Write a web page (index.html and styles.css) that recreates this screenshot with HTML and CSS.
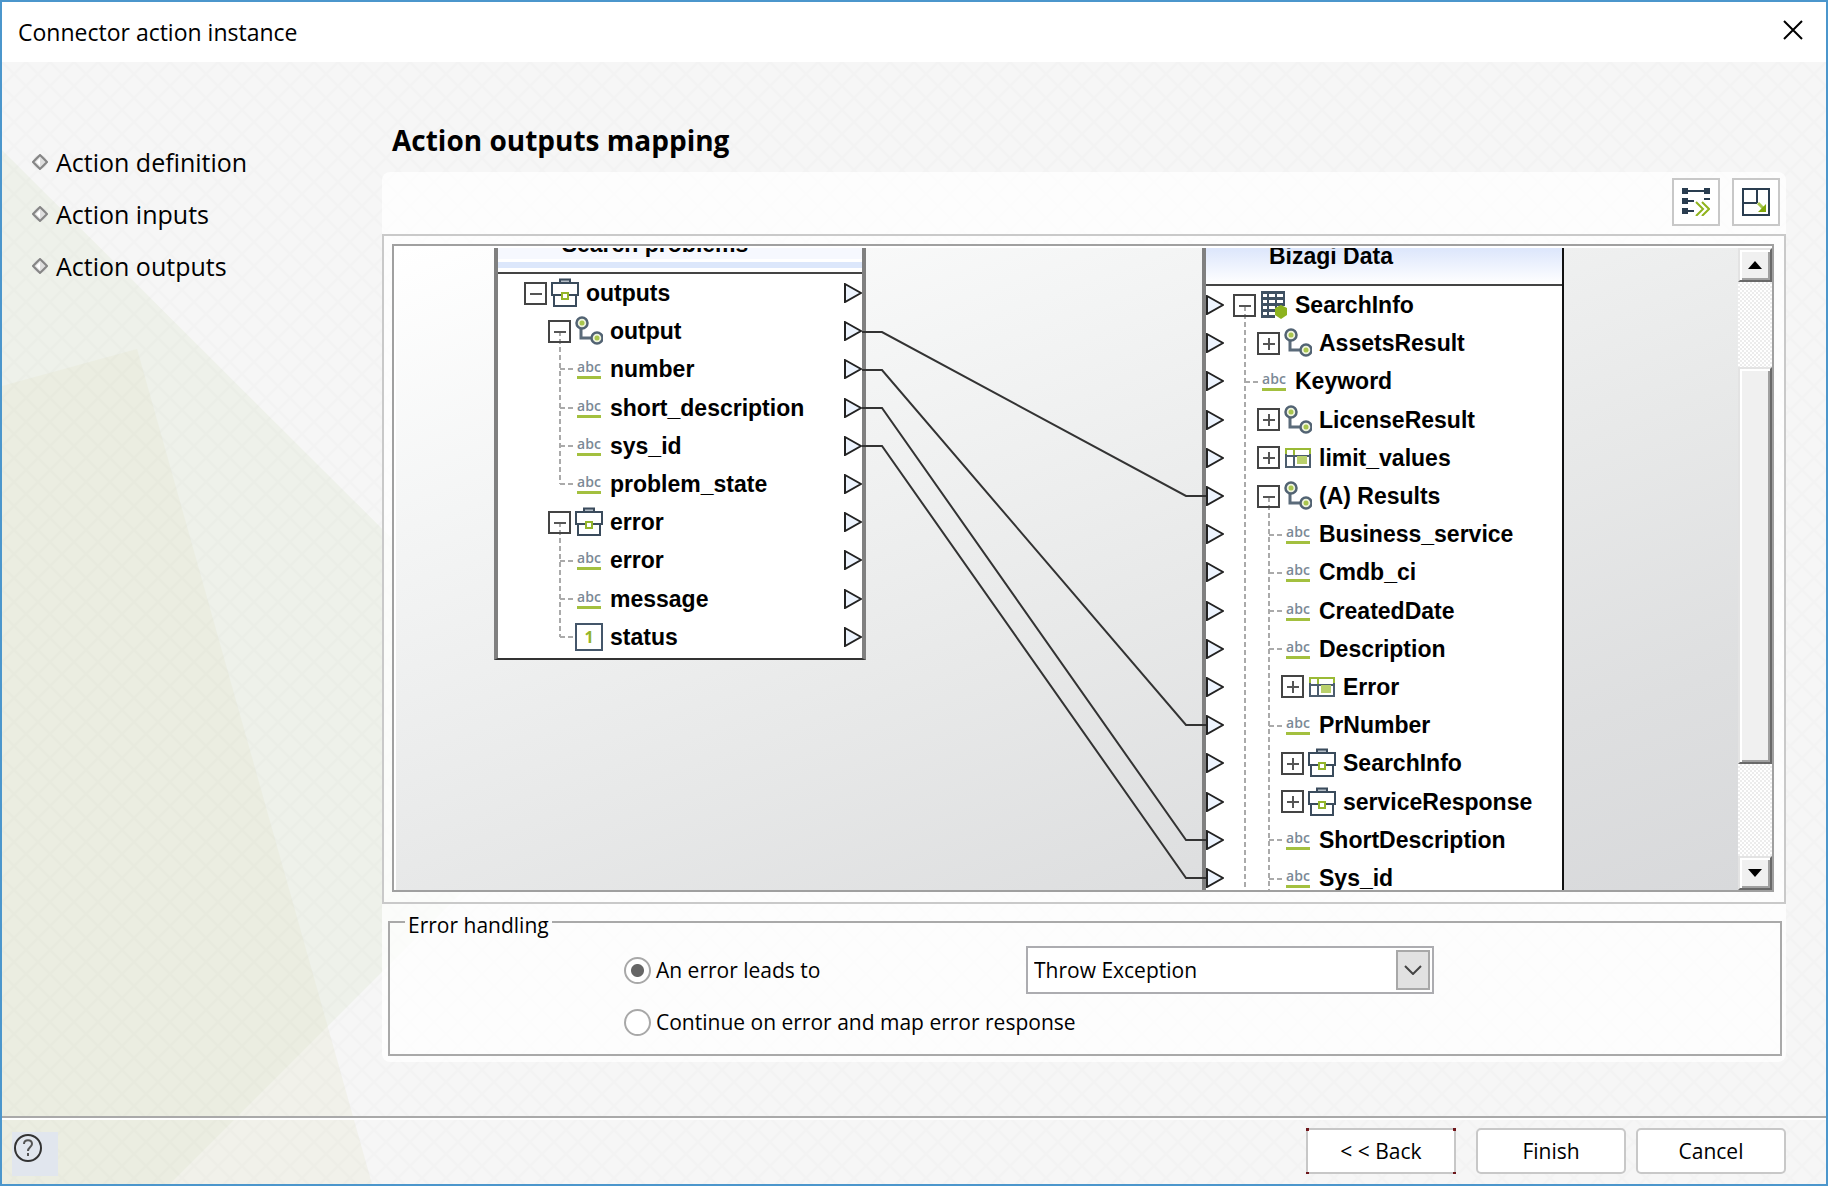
FILE: index.html
```html
<!DOCTYPE html>
<html lang="en">
<head>
<meta charset="utf-8">
<title>Connector action instance</title>
<link rel="stylesheet" href="styles.css">
</head>
<body>
<svg class="sprite" aria-hidden="true">
  <symbol id="case" viewBox="0 0 28 30">
    <path d="M9 5V1.500h10V5" fill="#b5bec7" stroke="#3a4b5c" stroke-width="2"/>
    <path d="M1 5h26v12H1zM3 17v11h22V17" fill="#fff" stroke="#3a4b5c" stroke-width="2"/>
    <rect x="11" y="15" width="6" height="6" fill="#fff" stroke="#93b52a" stroke-width="2"/>
  </symbol>
  <symbol id="link" viewBox="0 0 28 30">
    <path d="M6 12v10h12" fill="none" stroke="#5b6b7a" stroke-width="3"/>
    <circle cx="7" cy="7" r="5.500" fill="#eef3dd" stroke="#526373" stroke-width="2.500"/>
    <circle cx="22" cy="22" r="5.500" fill="#eef3dd" stroke="#526373" stroke-width="2.500"/>
    <circle cx="7" cy="7" r="2.500" fill="#a9c64e"/><circle cx="22" cy="22" r="2.500" fill="#a9c64e"/>
  </symbol>
  <symbol id="entity" viewBox="0 0 28 30">
    <path d="M1 1h24v27H1z" fill="#3f5163"/>
    <path d="M3 4h4v3H3zM9 4h6v3H9zM17 4h6v3h-6zM3 10h4v3H3zM9 10h6v3H9zM17 10h6v3h-6zM3 16h4v3H3zM9 16h6v3H9zM17 16h8v4h-8zM3 22h4v3H3zM9 22h6v3H9zM15 20h10v8H15z" fill="#fff"/>
    <path d="M21 15l6 3v7l-6 4-6-4v-7z" fill="#8db31f"/>
  </symbol>
  <symbol id="grid" viewBox="0 0 28 30">
    <path d="M2 10v14h24V10M2 13h24M10 13v11" fill="none" stroke="#4c5d6e" stroke-width="2"/>
    <path d="M1 6h26M2 5v6M10 5v7M26 5v6" fill="none" stroke="#9aba35" stroke-width="2"/>
    <rect x="13" y="13" width="10" height="8" fill="#b9d06c"/>
  </symbol>
  <symbol id="port" viewBox="0 0 18 20">
    <path d="M1 1l16 9-16 9z" fill="#edf4fe" stroke="#222" stroke-width="2"/>
  </symbol>
  <symbol id="bullet" viewBox="0 0 16 16">
    <circle cx="8" cy="8" r="7" fill="#e0e0e0"/>
    <path d="M8 1l7 7-7 7-7-7z" fill="#dedede" stroke="#858585" stroke-width="2"/>
    <path d="M8 4v8L4 8z" fill="#fff"/>
  </symbol>
</svg>

<div class="window">
  <header class="titlebar">
    <h1>Connector action instance</h1>
    <button class="close" aria-label="Close"><svg width="20" height="20" viewBox="0 0 20 20"><path d="M1 1l18 18M19 1L1 19" stroke="#000" stroke-width="2"/></svg></button>
  </header>

  <div class="content">
    <svg class="backdrop" aria-hidden="true">
      <defs>
        <pattern id="weave" width="24" height="24" patternUnits="userSpaceOnUse">
          <path d="M0 0l24 24M24 0L0 24" stroke="#000" stroke-opacity=".012" stroke-width="2"/>
        </pattern>
      </defs>
      <path d="M0 88L602 688L168 1122H0z" fill="#eef1ea"/>
      <path d="M0 324L135 287L370 1122H0z" fill="#e2e5c8" fill-opacity=".25"/>
      <rect width="100%" height="100%" fill="url(#weave)"/>
    </svg>

    <div class="columns">
      <nav class="steps">
        <ul>
          <li><svg width="16" height="16"><use href="#bullet"/></svg>Action definition</li>
          <li><svg width="16" height="16"><use href="#bullet"/></svg>Action inputs</li>
          <li><svg width="16" height="16"><use href="#bullet"/></svg>Action outputs</li>
        </ul>
      </nav>

      <main class="main">
        <h2>Action outputs mapping</h2>
        <div class="panel">
          <div class="toolbar">
            <button aria-label="Automatic mapping"><svg width="28" height="28" viewBox="0 0 28 28">
              <path d="M0 0h6v6H0zM22 0h6v6h-6zM0 10h6v6H0zM0 20h6v6H0zM6 2h16v2H6zM6 12h6v2H6zM6 22h6v2H6zM22 10h6v2h-6z" fill="#2a3d50"/>
              <path d="M14 14l7 7-7 7M20 14l7 7-7 7" fill="none" stroke="#8fb31c" stroke-width="2"/></svg></button>
            <button aria-label="Maximize"><svg width="28" height="28" viewBox="0 0 28 28">
              <path d="M1 1h26v26H1zM15 1v14M1 15h14" fill="none" stroke="#2a3d50" stroke-width="2"/>
              <path d="M16 15l6 6" stroke="#a9c64e" stroke-width="3"/><path d="M24 16v8h-8z" fill="#82a80c"/></svg></button>
          </div>

          <div class="frame">
            <div class="canvas">
              <div class="stage">
                <section class="node source">
                  <h3>Search problems</h3>
                  <svg class="tree" aria-hidden="true"><path d="M62 57V210M62 95h16M62 134h16M62 172h16M62 210h16M62 248V363M62 287h16M62 325h16M62 363h16"/></svg>
                  <ul>
                    <li><button class="fold" aria-label="Collapse outputs"></button><svg class="icon"><use href="#case"/></svg><span>outputs</span><svg class="port"><use href="#port"/></svg></li>
                    <li class="in1"><button class="fold" aria-label="Collapse output"></button><svg class="icon"><use href="#link"/></svg><span>output</span><svg class="port"><use href="#port"/></svg></li>
                    <li class="in1 leaf"><i>abc</i><span>number</span><svg class="port"><use href="#port"/></svg></li>
                    <li class="in1 leaf"><i>abc</i><span>short_description</span><svg class="port"><use href="#port"/></svg></li>
                    <li class="in1 leaf"><i>abc</i><span>sys_id</span><svg class="port"><use href="#port"/></svg></li>
                    <li class="in1 leaf"><i>abc</i><span>problem_state</span><svg class="port"><use href="#port"/></svg></li>
                    <li class="in1"><button class="fold" aria-label="Collapse error"></button><svg class="icon"><use href="#case"/></svg><span>error</span><svg class="port"><use href="#port"/></svg></li>
                    <li class="in1 leaf"><i>abc</i><span>error</span><svg class="port"><use href="#port"/></svg></li>
                    <li class="in1 leaf"><i>abc</i><span>message</span><svg class="port"><use href="#port"/></svg></li>
                    <li class="in1 leaf"><b>1</b><span>status</span><svg class="port"><use href="#port"/></svg></li>
                  </ul>
                </section>

                <section class="node target">
                  <h3>Bizagi Data</h3>
                  <svg class="tree" aria-hidden="true"><path d="M39 20V620M39 96h14M63 211V620M63 249h14M63 287h14M63 325h14M63 363h14M63 440h14M63 554h14M63 593h14"/></svg>
                  <ul>
                    <li><svg class="port"><use href="#port"/></svg><button class="fold" aria-label="Collapse SearchInfo"></button><svg class="icon"><use href="#entity"/></svg><span>SearchInfo</span></li>
                    <li class="in1"><svg class="port"><use href="#port"/></svg><button class="fold plus" aria-label="Expand AssetsResult"></button><svg class="icon"><use href="#link"/></svg><span>AssetsResult</span></li>
                    <li class="leaf"><svg class="port"><use href="#port"/></svg><i>abc</i><span>Keyword</span></li>
                    <li class="in1"><svg class="port"><use href="#port"/></svg><button class="fold plus" aria-label="Expand LicenseResult"></button><svg class="icon"><use href="#link"/></svg><span>LicenseResult</span></li>
                    <li class="in1"><svg class="port"><use href="#port"/></svg><button class="fold plus" aria-label="Expand limit_values"></button><svg class="icon"><use href="#grid"/></svg><span>limit_values</span></li>
                    <li class="in1"><svg class="port"><use href="#port"/></svg><button class="fold" aria-label="Collapse Results"></button><svg class="icon"><use href="#link"/></svg><span>(A) Results</span></li>
                    <li class="in1 leaf"><svg class="port"><use href="#port"/></svg><i>abc</i><span>Business_service</span></li>
                    <li class="in1 leaf"><svg class="port"><use href="#port"/></svg><i>abc</i><span>Cmdb_ci</span></li>
                    <li class="in1 leaf"><svg class="port"><use href="#port"/></svg><i>abc</i><span>CreatedDate</span></li>
                    <li class="in1 leaf"><svg class="port"><use href="#port"/></svg><i>abc</i><span>Description</span></li>
                    <li class="in2"><svg class="port"><use href="#port"/></svg><button class="fold plus" aria-label="Expand Error"></button><svg class="icon"><use href="#grid"/></svg><span>Error</span></li>
                    <li class="in1 leaf"><svg class="port"><use href="#port"/></svg><i>abc</i><span>PrNumber</span></li>
                    <li class="in2"><svg class="port"><use href="#port"/></svg><button class="fold plus" aria-label="Expand SearchInfo"></button><svg class="icon"><use href="#case"/></svg><span>SearchInfo</span></li>
                    <li class="in2"><svg class="port"><use href="#port"/></svg><button class="fold plus" aria-label="Expand serviceResponse"></button><svg class="icon"><use href="#case"/></svg><span>serviceResponse</span></li>
                    <li class="in1 leaf"><svg class="port"><use href="#port"/></svg><i>abc</i><span>ShortDescription</span></li>
                    <li class="in1 leaf"><svg class="port"><use href="#port"/></svg><i>abc</i><span>Sys_id</span></li>
                  </ul>
                </section>

                <svg class="wires" aria-hidden="true">
                  <path d="M466 84h20L790 248h20M466 122h20L790 477h20M466 160h20L790 592h20M466 198h20L790 630h20"/>
                </svg>
              </div>
              <div class="scrollbar">
                <button class="bevel" aria-label="Scroll up"><svg width="14" height="8"><path d="M7 0l7 8H0z"/></svg></button>
                <div class="gap-top"></div>
                <div class="thumb bevel"></div>
                <div class="gap-bottom"></div>
                <button class="bevel" aria-label="Scroll down"><svg width="14" height="8"><path d="M0 0h14L7 8z"/></svg></button>
              </div>
            </div>
          </div>

          <fieldset class="errors">
            <legend>Error handling</legend>
            <div class="row">
              <label class="choice"><input type="radio" name="mode" checked>An error leads to</label>
              <div class="picker">
                <select aria-label="An error leads to"><option>Throw Exception</option></select>
                <span class="drop"><svg width="18" height="10" viewBox="0 0 18 10"><path d="M1 1l8 8 8-8" fill="none" stroke="#444" stroke-width="2"/></svg></span>
              </div>
            </div>
            <div class="row">
              <label class="choice"><input type="radio" name="mode">Continue on error and map error response</label>
            </div>
          </fieldset>
        </div>
      </main>
    </div>

    <footer class="footer">
      <button class="help" aria-label="Help"><svg width="28" height="28" viewBox="0 0 28 28"><circle cx="14" cy="14" r="13" fill="none" stroke="#333" stroke-width="2"/><path d="M10 10c0-5 8-5 8 0 0 3-4 3-4 7M14 19v3" fill="none" stroke="#555" stroke-width="2"/></svg></button>
      <button class="action back">&lt; &lt; Back</button>
      <button class="action">Finish</button>
      <button class="action">Cancel</button>
    </footer>
  </div>
</div>
</body>
</html>
```
FILE: styles.css
```css
* { box-sizing: border-box; }

body {
  margin: 0;
  font: 21px/28px "Open Sans", "Noto Sans", sans-serif;
  color: #000;
}

button { padding: 0; border: 0; font: inherit; color: inherit; background: none; }
ul { margin: 0; padding: 0; list-style: none; }
h1, h2, h3 { margin: 0; }
.sprite { position: absolute; width: 0; height: 0; }

.window {
  display: flex;
  flex-direction: column;
  min-height: 100vh;
  border: 2px solid #4b96cc;
  background: #f6f6f6;
}

.titlebar {
  display: flex;
  align-items: center;
  justify-content: space-between;
  height: 60px;
  padding: 0 23px 0 16px;
  background: #fff;
}
.titlebar h1 { font-size: 23px; font-weight: 400; }
.close { display: flex; padding: 0 0 4px; }

.content {
  position: relative;
  display: flex;
  flex: 1;
  flex-direction: column;
}
.backdrop { position: absolute; inset: 0; width: 100%; height: 100%; }

.columns { position: relative; display: flex; flex: 1; }

.steps { width: 380px; padding: 74px 0 0 30px; }
.steps li {
  display: flex;
  align-items: center;
  gap: 8px;
  height: 52px;
  font-size: 25px;
}
.steps svg { flex: none; }

.main {
  display: flex;
  flex: 1;
  flex-direction: column;
  padding: 58px 40px 54px 0;
}
.main h2 { padding: 0 10px 12px; font-size: 28px; line-height: 40px; }

.panel {
  display: flex;
  flex: 1;
  flex-direction: column;
  border-radius: 8px;
  background: rgba(255, 255, 255, .75);
}

.toolbar {
  display: flex;
  justify-content: flex-end;
  gap: 12px;
  padding: 6px 6px 8px;
}
.toolbar button {
  display: grid;
  place-items: center;
  width: 48px;
  height: 48px;
  border: 2px solid #c8c8c8;
  background: #fff;
}

.frame {
  display: flex;
  flex: 1;
  padding: 8px 10px 10px 8px;
  border: 2px solid #c9c9c9;
}
.canvas {
  display: flex;
  flex: 1;
  padding: 2px 0 0 2px;
  border: 2px solid #a0a0a0;
  background: #fff;
}
.stage {
  position: relative;
  flex: 1;
  min-height: 400px;
  overflow: hidden;
  background: linear-gradient(160deg, #fff 0%, #f4f5f5 25%, #e8e9e9 55%, #dedfe0 80%, #d8d9db 100%);
}

/* Diagram nodes */
.node {
  position: absolute;
  border-left: 4px solid #808080;
  background: #fff;
  font: bold 23px/28px "Liberation Sans", Arial, sans-serif;
}
.node h3 {
  padding-right: 50px;
  border-bottom: 2px solid #444;
  font-size: 23px;
  text-align: center;
}
.node ul { position: relative; display: grid; grid-auto-rows: 1fr; }
.source {
  top: -40px;
  left: 98px;
  width: 372px;
  border-right: 4px solid #808080;
  border-bottom: 2px solid #333;
}
.source h3 {
  height: 66px;
  padding-top: 22px;
  background: linear-gradient(#f6f8fe 0 80%, #fff 80% 84%, #dce7fb 84% 94%, #fff 94%);
}
.source ul { height: 382px; margin-bottom: 2px; padding-left: 26px; }
.target {
  top: -30px;
  left: 806px;
  width: 362px;
  border-right: 2px solid #111;
}
.target h3 {
  height: 68px;
  padding-top: 24px;
  background: linear-gradient(#d2e0fb, #dfe8fc 50%, #fff);
  padding-right: 106px;
}
.target ul { height: 611px; }

.node li { display: flex; align-items: center; }
.in1 .fold, .source .in1.leaf i, .source .in1.leaf b { margin-left: 24px; }
.in2 .fold { margin-left: 48px; }
.fold {
  position: relative;
  flex: none;
  width: 23px;
  height: 23px;
  margin-right: 4px;
  border: 2px solid #444;
}
.fold::before, .plus::after {
  content: "";
  position: absolute;
  top: 9px;
  left: 4px;
  width: 12px;
  height: 2px;
  background: #555;
}
.plus::after { transform: rotate(90deg); }
.icon { flex: none; width: 28px; height: 30px; margin-right: 7px; }

.leaf i {
  flex: none;
  width: 24px;
  height: 20px;
  margin-right: 9px;
  border-bottom: 3px solid #a3c03f;
  font: 600 14px/15px "Open Sans", sans-serif;
  color: #7b8996;
  text-align: center;
}
.leaf b {
  flex: none;
  width: 28px;
  height: 28px;
  margin-right: 7px;
  border: 2px solid #44566a;
  font: bold 16px/24px "Open Sans", sans-serif;
  color: #93b52a;
  text-align: center;
}
.source .leaf.in1 { padding-left: 29px; }
.source .leaf.in1 b { margin-left: 22px; }
.target .leaf i { margin-left: 29px; }
.target .in1.leaf i { margin-left: 53px; }

.port { flex: none; width: 18px; height: 20px; }
.source .port { margin-left: auto; }
.target .port { margin-right: 9px; }

.tree {
  position: absolute;
  width: 200px;
  height: 620px;
  overflow: visible;
}
.tree path, .wires path { fill: none; }
.tree path { stroke: #aaa; stroke-width: 2; stroke-dasharray: 5 3; }

.wires { position: absolute; inset: 0; width: 100%; height: 100%; }
.wires path { stroke: #333; stroke-width: 2; }

/* Scroll bar */
.scrollbar {
  display: flex;
  flex-direction: column;
  width: 34px;
  background: repeating-conic-gradient(#ececec 0 25%, #fff 0 50%) 0 0 / 4px 4px;
}
.scrollbar button { display: grid; flex: none; place-items: center; height: 34px; }
.bevel {
  border: 2px solid;
  border-color: #e3e3e3 #696969 #696969 #e3e3e3;
  background: #f0f0f0;
  box-shadow: inset 2px 2px #fff, inset -2px -2px #a0a0a0;
}
.gap-top { flex: 86; }
.thumb { flex: 395; }
.gap-bottom { flex: 93; }

/* Error handling */
.errors {
  margin: 1px 4px 6px 6px;
  padding: 7px 0 4px;
  border: 2px solid #a9a9a9;
}
.errors legend { margin-left: 15px; padding: 6px 3px 0; }
.row { display: flex; align-items: center; height: 48px; }
.row + .row { height: 56px; }
.choice {
  display: flex;
  align-items: center;
  gap: 5px;
  width: 402px;
  margin-left: 234px;
  white-space: nowrap;
}
.choice input {
  appearance: none;
  flex: none;
  width: 27px;
  height: 27px;
  margin: 0;
  border: 2px solid #a8a8a8;
  border-radius: 50%;
  background: #fff;
}
.choice input:checked { background: radial-gradient(circle, #666 6px, #fff 7px); }
.picker { position: relative; width: 408px; }
.picker select {
  appearance: none;
  display: block;
  width: 100%;
  height: 48px;
  padding: 0 40px 0 6px;
  border: 2px solid #acacb0;
  border-radius: 0;
  font: inherit;
  color: #000;
  background: #fff;
}
.drop {
  position: absolute;
  top: 4px;
  right: 4px;
  display: grid;
  place-items: center;
  width: 34px;
  height: 40px;
  border: 2px solid #a8a8a8;
  background: #e1e1e1;
  pointer-events: none;
}

/* Footer */
.footer {
  position: relative;
  display: flex;
  align-items: center;
  gap: 10px;
  height: 68px;
  padding: 8px 40px 8px 10px;
  border-top: 2px solid #a9a9a9;
  box-shadow: inset 0 2px #fff;
}
.help {
  display: flex;
  align-items: flex-start;
  align-self: flex-end;
  width: 46px;
  height: 44px;
  margin-right: auto;
  padding: 2px;
  background: #e1e6ee;
}
.action {
  width: 150px;
  height: 46px;
  border: 2px solid #c8c8c8;
  border-radius: 5px;
  background: #fff;
}
.back {
  margin-right: 10px;
  border-radius: 0;
  background:
    linear-gradient(#8c1c22, #8c1c22) 0 0 / 3px 3px no-repeat border-box,
    linear-gradient(#8c1c22, #8c1c22) 100% 0 / 3px 3px no-repeat border-box,
    linear-gradient(#8c1c22, #8c1c22) 0 100% / 3px 2px no-repeat border-box,
    linear-gradient(#8c1c22, #8c1c22) 100% 100% / 3px 2px no-repeat border-box,
    #fff;
  border-color: rgba(0, 0, 0, .22);
}
```
